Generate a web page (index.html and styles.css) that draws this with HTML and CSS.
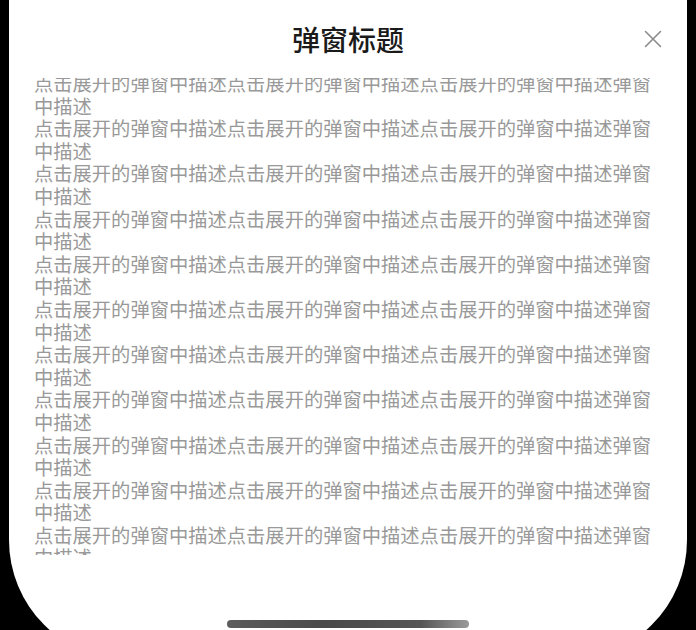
FILE: index.html
```html
<!DOCTYPE html>
<html lang="zh-CN">
<head>
<meta charset="utf-8">
<title>弹窗标题</title>
<link rel="stylesheet" href="styles.css">
</head>
<body>
<div class="sheet">
  <div class="header">
    <span class="spacer"></span>
    <h1 class="title">弹窗标题</h1>
    <button class="close" aria-label="关闭">
      <svg width="18" height="18" viewBox="0 0 18 18"><path d="M1.5 1.5 L16.5 16.5 M16.5 1.5 L1.5 16.5" stroke="#8c8c8c" stroke-width="1.6" stroke-linecap="round" fill="none"/></svg>
    </button>
  </div>
  <div class="body">
    <div class="content">
      <p>点击展开的弹窗中描述点击展开的弹窗中描述点击展开的弹窗中描述弹窗中描述</p>
      <p>点击展开的弹窗中描述点击展开的弹窗中描述点击展开的弹窗中描述弹窗中描述</p>
      <p>点击展开的弹窗中描述点击展开的弹窗中描述点击展开的弹窗中描述弹窗中描述</p>
      <p>点击展开的弹窗中描述点击展开的弹窗中描述点击展开的弹窗中描述弹窗中描述</p>
      <p>点击展开的弹窗中描述点击展开的弹窗中描述点击展开的弹窗中描述弹窗中描述</p>
      <p>点击展开的弹窗中描述点击展开的弹窗中描述点击展开的弹窗中描述弹窗中描述</p>
      <p>点击展开的弹窗中描述点击展开的弹窗中描述点击展开的弹窗中描述弹窗中描述</p>
      <p>点击展开的弹窗中描述点击展开的弹窗中描述点击展开的弹窗中描述弹窗中描述</p>
      <p>点击展开的弹窗中描述点击展开的弹窗中描述点击展开的弹窗中描述弹窗中描述</p>
      <p>点击展开的弹窗中描述点击展开的弹窗中描述点击展开的弹窗中描述弹窗中描述</p>
      <p>点击展开的弹窗中描述点击展开的弹窗中描述点击展开的弹窗中描述弹窗中描述</p>
      <p>点击展开的弹窗中描述点击展开的弹窗中描述点击展开的弹窗中描述弹窗中描述</p>
    </div>
  </div>
  <div class="home-indicator"></div>
</div>
</body>
</html>
```

FILE: styles.css
```css
html, body {
  margin: 0;
  padding: 0;
}
body {
  background: #000;
  height: 630px;
  overflow: hidden;
  font-family: "Noto Sans CJK SC", "Noto Sans", sans-serif;
}
.sheet {
  margin: 0 9px;
  height: 660px;
  background: #fff;
  border-radius: 0 0 120px 120px;
  display: flex;
  flex-direction: column;
}
.header {
  height: 78px;
  flex: none;
  padding: 0 25px;
  display: grid;
  grid-template-columns: 1fr auto 1fr;
  align-items: center;
}
.title {
  margin: 0;
  font-size: 28px;
  line-height: 1;
  font-weight: 500;
  color: #1a1a1a;
}
.close {
  justify-self: end;
  width: 18px;
  height: 18px;
  padding: 0;
  border: 0;
  background: none;
  display: flex;
}
.body {
  height: 477px;
  flex: none;
  overflow: hidden;
  padding: 0 25px;
}
.content {
  margin-top: -6px;
}
.content p {
  margin: 0;
  font-size: 19.3px;
  line-height: 22.6px;
  color: #999;
}
.home-indicator {
  flex: none;
  align-self: center;
  margin-top: 65px;
  width: 242px;
  height: 8px;
  border-radius: 4px;
  background: linear-gradient(to right, #5c5c5c 0%, #4a4a4a 40%, #555 80%, #9a9a9a 100%);
}
```
